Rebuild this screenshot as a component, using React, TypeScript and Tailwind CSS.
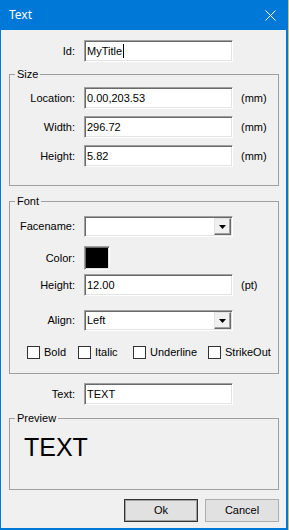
import type { ReactNode } from 'react';

const sunken =
  'bg-white border border-t-[#a0a0a0] border-l-[#a0a0a0] border-b-white border-r-white shadow-[inset_1px_1px_0_#696969,inset_-1px_-1px_0_#e3e3e3]';

function Input({ value, caret }: { value: string; caret?: boolean }) {
  return (
    <div className={`flex h-[22px] w-[149px] items-center pl-[2px] ${sunken}`}>
      <span>{value}</span>
      {caret && <span className="ml-px h-[14px] w-px bg-black" />}
    </div>
  );
}

function Combo({ value }: { value: string }) {
  return (
    <div className={`flex h-[21px] w-[149px] items-center justify-between pl-[2px] ${sunken}`}>
      <span>{value}</span>
      <div className="mr-px flex h-[17px] w-[17px] items-center justify-center border border-t-[#e3e3e3] border-l-[#e3e3e3] border-b-[#696969] border-r-[#696969] bg-[#f0f0f0] shadow-[inset_-1px_-1px_0_#a0a0a0]">
        <svg width="7" height="4" viewBox="0 0 7 4">
          <path d="M0 0h7L3.5 4z" fill="#000" />
        </svg>
      </div>
    </div>
  );
}

function Row({ label, labelW, children, unit }: { label: string; labelW: string; children: ReactNode; unit?: string }) {
  return (
    <div className="flex items-center">
      <div className={`${labelW} text-right`}>{label}</div>
      <div className="ml-[9px]">{children}</div>
      {unit && <div className="ml-[8px]">{unit}</div>}
    </div>
  );
}

function Group({ title, className, children }: { title: string; className: string; children: ReactNode }) {
  return (
    <div className={`relative ml-[8px] w-[270px] border border-[#a0a0a0] ${className}`}>
      <span className="absolute left-[5px] top-[-8px] bg-[#f0f0f0] px-[2px] leading-[14px]">{title}</span>
      {children}
    </div>
  );
}

function Check({ label, w }: { label: string; w: string }) {
  return (
    <div className={`flex h-[13px] items-center ${w}`}>
      <div className="h-[13px] w-[13px] shrink-0 border border-[#333] bg-white" />
      <span className="ml-[4px] leading-[13px]">{label}</span>
    </div>
  );
}

export default function App() {
  return (
    <div className="flex h-[530px] w-[289px] bg-[#c9c27c] font-['Liberation_Sans',Arial,sans-serif] text-[11px] text-black">
      <div className="flex h-[530px] w-[288px] flex-col border-b-2 border-l border-r-2 border-[#0078d7] bg-[#f0f0f0]">
        <div className="flex h-[30px] shrink-0 items-center justify-between bg-[#0078d7] text-white">
          <span className="pl-[8px] font-['Noto_Sans',sans-serif] text-[12px]">Text</span>
          <svg width="11" height="11" viewBox="0 0 11 11" className="mr-[10px]">
            <path d="M0.5 0.5l10 10M10.5 0.5l-10 10" stroke="#fff" strokeWidth="1" />
          </svg>
        </div>

        <div className="mt-[10px]">
          <Row label="Id:" labelW="w-[74px]">
            <Input value="MyTitle" caret />
          </Row>
        </div>

        <Group title="Size" className="mt-[12px] flex flex-col gap-[7px] pb-[18px] pt-[12px]">
          <Row label="Location:" labelW="w-[65px]" unit="(mm)">
            <Input value="0.00,203.53" />
          </Row>
          <Row label="Width:" labelW="w-[65px]" unit="(mm)">
            <Input value="296.72" />
          </Row>
          <Row label="Height:" labelW="w-[65px]" unit="(mm)">
            <Input value="5.82" />
          </Row>
        </Group>

        <Group title="Font" className="mt-[15px] flex flex-col pb-[14px] pt-[14px]">
          <Row label="Facename:" labelW="w-[65px]">
            <Combo value="" />
          </Row>
          <div className="mt-[9px]">
            <Row label="Color:" labelW="w-[65px]">
              <div className="h-[24px] w-[26px] border border-t-[#a0a0a0] border-l-[#a0a0a0] border-b-white border-r-white bg-black shadow-[inset_1px_1px_0_#696969,inset_-1px_-1px_0_#e3e3e3]" />
            </Row>
          </div>
          <div className="mt-[4px]">
            <Row label="Height:" labelW="w-[65px]" unit="(pt)">
              <Input value="12.00" />
            </Row>
          </div>
          <div className="mt-[14px]">
            <Row label="Align:" labelW="w-[65px]">
              <Combo value="Left" />
            </Row>
          </div>
          <div className="mt-[15px] flex pl-[17px]">
            <Check label="Bold" w="w-[51px]" />
            <Check label="Italic" w="w-[55px]" />
            <Check label="Underline" w="w-[75px]" />
            <Check label="StrikeOut" w="" />
          </div>
        </Group>

        <div className="mt-[9px]">
          <Row label="Text:" labelW="w-[74px]">
            <Input value="TEXT" />
          </Row>
        </div>

        <Group title="Preview" className="mt-[13px] h-[72px] pl-[14px] pt-[16px]">
          <div className="text-[25px] leading-none">TEXT</div>
        </Group>

        <div className="ml-[8px] mt-[9px] flex w-[270px] justify-end gap-[7px]">
          <button className="h-[23px] w-[74px] border border-[#333] bg-[#e1e1e1] shadow-[inset_0_0_0_1px_#a0a0a0]">Ok</button>
          <button className="h-[23px] w-[74px] border border-[#adadad] bg-[#e1e1e1]">Cancel</button>
        </div>
      </div>
    </div>
  );
}
